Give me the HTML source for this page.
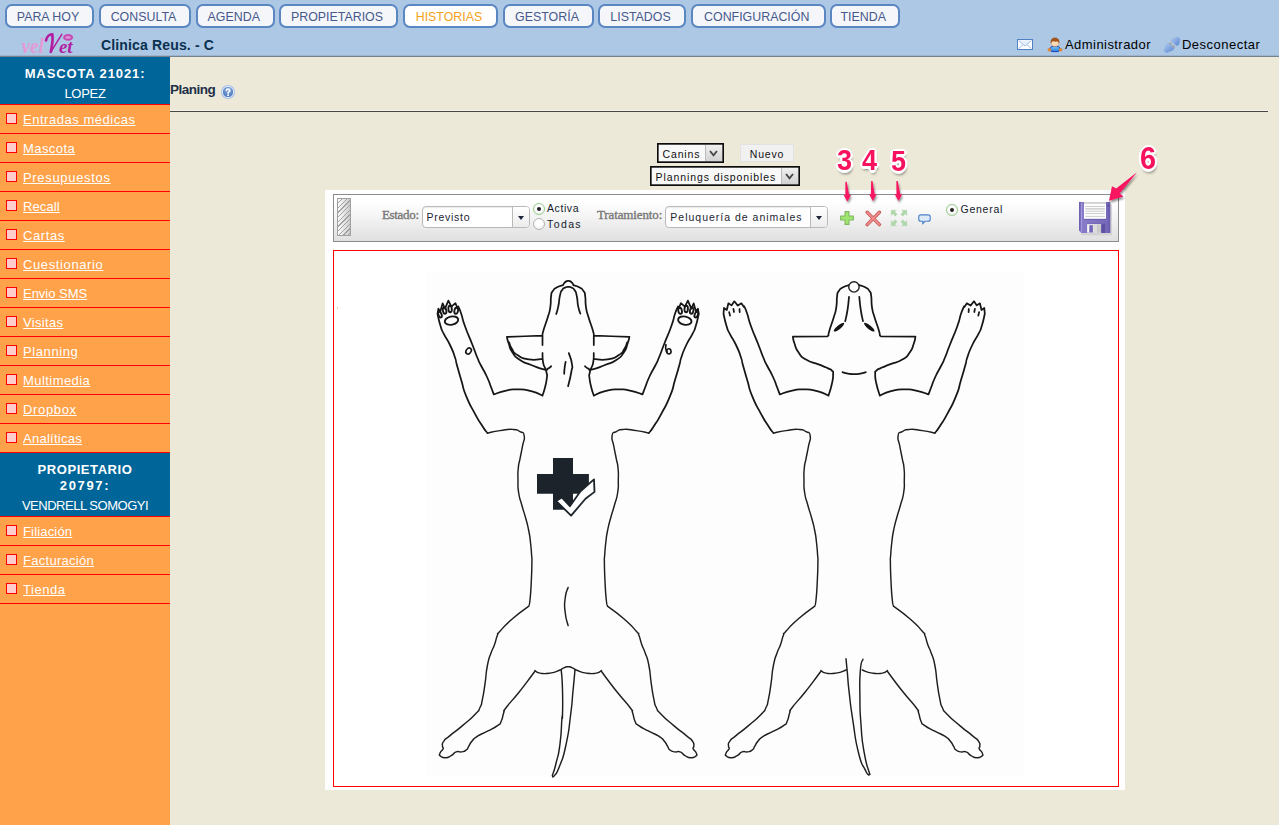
<!DOCTYPE html>
<html lang="es">
<head>
<meta charset="utf-8">
<title>Planing</title>
<style>
*{box-sizing:border-box;margin:0;padding:0}
html,body{width:1279px;height:825px;overflow:hidden}
body{background:#ece9d8;font-family:"Liberation Sans",sans-serif;position:relative;color:#000}
.a{position:absolute}
#top{position:absolute;left:0;top:0;width:1279px;height:56px;background:#adc8e4}
#topl1{position:absolute;left:0;top:55px;width:1279px;height:1px;background:#9db4cc}
#topl2{position:absolute;left:0;top:56px;width:1279px;height:1px;background:#74828f}
.tab{position:absolute;top:4px;height:23.5px;border:2px solid #5a86c2;border-radius:7px;background:#f4f6fa;color:#47598c;font-size:12.4px;line-height:22.4px;text-align:center;white-space:nowrap;padding-right:3px}
.tab.on{color:#f4a21c;background:#fff}
#clin{position:absolute;left:101px;top:36.5px;font-size:14px;font-weight:bold;color:#0a3050;line-height:16px;white-space:nowrap;letter-spacing:.15px}
.tr{position:absolute;top:37px;font-size:13px;line-height:16px;color:#000;white-space:nowrap}
#side{position:absolute;left:0;top:57px;width:170px;height:768px;background:#ffa24a}
.hd{position:absolute;left:0;width:170px;background:#006699;color:#fff;font-size:13px}
.hd b,.hd span{position:absolute;left:0;width:170px;text-align:center;line-height:16px;white-space:nowrap}
.it{position:absolute;left:0;width:170px;height:29px;border-bottom:1px solid #ff0000}
.it.first{height:30px;border-top:1px solid #ff0000}
.it i{position:absolute;left:6px;top:8px;width:11px;height:11px;border:1px solid #ff0000;background:#ffcccc}
.it a{position:absolute;left:23px;top:6px;font-size:13px;line-height:18px;color:#fff;text-decoration:underline;white-space:nowrap}
#ttl{position:absolute;left:170px;top:81px;font-size:13.5px;line-height:18px;font-weight:bold;color:#1e3048;letter-spacing:-.5px}
#hr0{position:absolute;left:170px;top:110px;width:1098px;height:1px;background:#f4f2e0}
#hr{position:absolute;left:170px;top:111px;width:1098px;height:1px;background:#484848}
.sel{position:absolute;background:#f8f8f8;border:1px solid #0c0c0c;box-shadow:inset 0 0 0 .7px #1c1c1c;font-size:10.5px;line-height:14px;white-space:nowrap;color:#111}
.sel s{position:absolute;right:1px;top:1px;width:17px;height:16px;background:linear-gradient(#f0f0f0,#d2d2d2);border-left:1px solid #bbb}
#nuevo{position:absolute;left:740px;top:144px;width:54px;height:18px;background:#f1f1f1;border:1px solid #e2e2e2;font-size:10.5px;line-height:18.8px;text-align:center;letter-spacing:.82px;color:#111}
#panel{position:absolute;left:325px;top:190px;width:800px;height:600px;background:#fff}
#tb{position:absolute;left:333px;top:194px;width:786px;height:48px;border:1px solid #8c8c8c;background:linear-gradient(#ffffff,#ffffff 14%,#f5f5f5 45%,#e9e9e9 75%,#e0e0e0)}
#cv{position:absolute;left:333px;top:250px;width:786px;height:537px;border:1px solid #ff0000;background:#fff}
.lb{position:absolute;font-family:"Liberation Serif",serif;font-size:13px;line-height:16px;color:#747474;white-space:nowrap;-webkit-text-stroke:.35px #7a7a7a}
.cb{position:absolute;top:206px;height:22px;border:1px solid #b9b9b9;border-radius:4px;background:#fff;font-size:10.5px;line-height:20px;color:#1c2430;white-space:nowrap;box-shadow:inset 0 1px 1px rgba(0,0,0,.08)}
.cb s{position:absolute;right:0;top:0;width:17px;height:20px;border-left:1px solid #b9b9b9;background:linear-gradient(#fff,#ececec);border-radius:0 3px 3px 0}
.cb s:after{content:"";position:absolute;left:5px;top:8.8px;border:3.5px solid transparent;border-top:4.5px solid #1c2438;border-bottom:0}
.rd{position:absolute;width:12px;height:12px;border-radius:50%;border:1px solid #b4b4b4;background:radial-gradient(circle at 50% 40%,#fff 40%,#e4e4e4)}
.rd.on{border-color:#9ccf90;box-shadow:0 0 1px #b4dcaa}
.rd.on:after{content:"";position:absolute;left:3px;top:3px;width:4px;height:4px;border-radius:50%;background:#222}
.rl{position:absolute;font-size:10.5px;line-height:14px;color:#14202c;white-space:nowrap}
.num{position:absolute;font-weight:bold;font-size:30px;line-height:30px;color:#f7125e;white-space:nowrap;transform-origin:0 0;
 text-shadow:-2px 0 0 #fff,2px 0 0 #fff,0 -2px 0 #fff,0 2px 0 #fff,-1.5px -1.5px 0 #fff,1.5px -1.5px 0 #fff,-1.5px 1.5px 0 #fff,1.5px 1.5px 0 #fff,-2.5px 0 0 #fff,2.5px 0 0 #fff,0 2.5px 0 #fff,0 -2.5px 0 #fff,1px 4px 3px rgba(0,0,0,.45)}
</style>
</head>
<body>
<div id="top"></div><div id="topl1"></div><div id="topl2"></div>
<div class="tab" style="left:5px;width:89px">PARA HOY</div>
<div class="tab" style="left:99px;width:92px">CONSULTA</div>
<div class="tab" style="left:196px;width:78.5px">AGENDA</div>
<div class="tab" style="left:279px;width:119px">PROPIETARIOS</div>
<div class="tab on" style="left:403px;width:95px">HISTORIAS</div>
<div class="tab" style="left:503px;width:91px">GESTORÍA</div>
<div class="tab" style="left:598px;width:88px">LISTADOS</div>
<div class="tab" style="left:691px;width:134.5px">CONFIGURACIÓN</div>
<div class="tab" style="left:830px;width:69.5px">TIENDA</div>
<div id="side"></div>
<div class="hd" style="top:57px;height:47px"><b style="top:9px;letter-spacing:.88px">MASCOTA 21021:</b><span style="top:29px;letter-spacing:-.3px">LOPEZ</span></div>
<div class="it first" style="top:104px"><i></i><a style="letter-spacing:0.53px">Entradas médicas</a></div>
<div class="it" style="top:134px"><i></i><a style="letter-spacing:0.43px">Mascota</a></div>
<div class="it" style="top:163px"><i></i><a style="letter-spacing:0.68px">Presupuestos</a></div>
<div class="it" style="top:192px"><i></i><a style="letter-spacing:0.09px">Recall</a></div>
<div class="it" style="top:221px"><i></i><a style="letter-spacing:0.58px">Cartas</a></div>
<div class="it" style="top:250px"><i></i><a style="letter-spacing:0.62px">Cuestionario</a></div>
<div class="it" style="top:279px"><i></i><a style="letter-spacing:-0.02px">Envio SMS</a></div>
<div class="it" style="top:308px"><i></i><a style="letter-spacing:0.34px">Visitas</a></div>
<div class="it" style="top:337px"><i></i><a style="letter-spacing:0.6px">Planning</a></div>
<div class="it" style="top:366px"><i></i><a style="letter-spacing:0.44px">Multimedia</a></div>
<div class="it" style="top:395px"><i></i><a style="letter-spacing:0.66px">Dropbox</a></div>
<div class="it" style="top:424px"><i></i><a style="letter-spacing:0.27px">Analíticas</a></div>
<div class="hd" style="top:453px;height:63px"><b style="top:8.5px;letter-spacing:.56px">PROPIETARIO</b><b style="top:25px;letter-spacing:1.67px">20797:</b><span style="top:45px;letter-spacing:-.48px">VENDRELL SOMOGYI</span></div>
<div class="it first" style="top:516px"><i></i><a style="letter-spacing:0.17px">Filiación</a></div>
<div class="it" style="top:546px"><i></i><a style="letter-spacing:0.28px">Facturación</a></div>
<div class="it" style="top:575px"><i></i><a style="letter-spacing:0.54px">Tienda</a></div>
<!-- logo -->
<svg class="a" style="left:18px;top:30px" width="60" height="26" viewBox="18 30 60 26">
 <text x="21.4" y="52.6" font-family="Liberation Serif" font-style="italic" font-weight="bold" font-size="22" fill="#e39bd7" textLength="22.6" lengthAdjust="spacingAndGlyphs">vel</text>
 <path d="M46 40.4 C46.8 36.6 49.6 34.2 52.2 34.4 C53.6 39 51.6 47 50.8 52" fill="none" stroke="#b21ea2" stroke-width="2.7" stroke-linecap="round"/>
 <path d="M50.8 52.3 C53.4 47.6 58.6 39.6 61.8 34.4" fill="none" stroke="#b21ea2" stroke-width="1.5" stroke-linecap="round"/>
 <text x="59" y="52.6" font-family="Liberation Serif" font-style="italic" font-weight="bold" font-size="19" fill="#b21ea2" textLength="13.6" lengthAdjust="spacingAndGlyphs">et</text>
 <ellipse cx="68.1" cy="37.4" rx="5" ry="3.4" fill="#c64cb6"/>
 <ellipse cx="68.1" cy="37.4" rx="2.8" ry="1.2" fill="#e29ad8"/>
</svg>
<div id="clin">Clinica Reus. - C</div>
<!-- mail -->
<svg class="a" style="left:1017px;top:39px" width="16" height="11" viewBox="0 0 16 11">
 <rect x=".5" y=".5" width="15" height="10" fill="#fdfeff" stroke="#4f80c4"/>
 <path d="M1.6 1.6 L8 7 L14.4 1.6 Z" fill="#e6effc"/>
 <path d="M1.6 1.6 L8 7 L14.4 1.6 M1.6 9.6 L6 5.6 M14.4 9.6 L10 5.6" fill="none" stroke="#a4bfe8" stroke-width="1"/>
</svg>
<!-- user -->
<svg class="a" style="left:1047px;top:37px" width="16" height="16" viewBox="1047 37 16 16">
 <defs><linearGradient id="ub" x1="0" y1="0" x2="0" y2="1"><stop offset="0" stop-color="#6cc4fb"/><stop offset="1" stop-color="#2f7fe6"/></linearGradient></defs>
 <path d="M1051.6 46.4 L1049 49.6 L1051 50.2 L1051.6 51.6 L1058.4 51.6 L1059 50.2 L1061 49.6 L1058.4 46.4 Z" fill="url(#ub)" stroke="#1a3fb2" stroke-width="1" stroke-linejoin="round"/>
 <circle cx="1049.4" cy="49.8" r="1.5" fill="#f0923a" stroke="#d0701c" stroke-width=".5"/>
 <circle cx="1060.6" cy="49.8" r="1.5" fill="#f0923a" stroke="#d0701c" stroke-width=".5"/>
 <ellipse cx="1055" cy="42.4" rx="3.9" ry="4.2" fill="#fbd9b8" stroke="#c08040" stroke-width=".5"/>
 <path d="M1051 42.6 C1050.6 39.4 1052.6 37.9 1055 37.9 C1057.4 37.9 1059.4 39.4 1059 42.6 C1058.6 41.4 1057.6 40.8 1055.2 41.4 C1053 40.6 1051.4 41.4 1051 42.6 Z" fill="#a4561c" stroke="#8a4513" stroke-width=".5"/>
</svg>
<div class="tr" style="left:1065px;letter-spacing:.44px">Administrador</div>
<!-- plug -->
<svg class="a" style="left:1162px;top:35px" width="20" height="20" viewBox="1162 35 20 20">
 <defs><linearGradient id="pg" x1="0" y1="0" x2="1" y2="1"><stop offset="0" stop-color="#b7cff0"/><stop offset="1" stop-color="#4f7fd0"/></linearGradient></defs>
 <path d="M1171.2 40.5 L1177.5 36.9 L1180.1 39 L1178.9 44.7 L1176.4 45.8 Z" fill="url(#pg)" stroke="#86a8e0" stroke-width=".6"/>
 <path d="M1163.9 50.8 L1166.3 52.9 L1172.8 50.3 L1174.7 47.5 L1169.1 43.3 L1166.3 44.7 Z" fill="url(#pg)" stroke="#86a8e0" stroke-width=".6"/>
 <rect x="1169.3" y="42.4" width="2.2" height="2.4" fill="#a8a8a4" transform="rotate(-40 1170.4 43.6)"/>
 <rect x="1172.4" y="45.2" width="2.2" height="2.4" fill="#a8a8a4" transform="rotate(-40 1173.5 46.4)"/>
</svg>
<div class="tr" style="left:1182px;letter-spacing:.48px">Desconectar</div>

<div id="ttl">Planing</div>
<svg class="a" style="left:220px;top:84px" width="16" height="16" viewBox="0 0 16 16">
 <defs><radialGradient id="hg" cx="50%" cy="35%" r="65%"><stop offset="0" stop-color="#8fb2e0"/><stop offset="1" stop-color="#3f6fb4"/></radialGradient></defs>
 <circle cx="8" cy="8" r="7" fill="#a9c1e8"/>
 <circle cx="8" cy="8" r="5.6" fill="url(#hg)" stroke="#eef3fb" stroke-width=".9"/>
 <path d="M6.3 6.5 C6.3 4.6 9.9 4.6 9.9 6.5 C9.9 7.7 8.1 7.7 8.1 9.2" fill="none" stroke="#fff" stroke-width="1.5" stroke-linecap="round"/>
 <circle cx="8.1" cy="11.2" r=".95" fill="#fff"/>
</svg>
<div id="hr0"></div><div id="hr"></div>

<div class="sel" style="left:657px;top:143px;width:67px;height:20px;padding:3px 0 0 4.5px;letter-spacing:.87px">Canins<s></s>
 <svg class="a" style="right:5px;top:6px" width="9" height="7" viewBox="0 0 9 7"><path d="M1 1 L4.5 5.4 L8 1" fill="none" stroke="#444" stroke-width="1.8"/></svg></div>
<div id="nuevo">Nuevo</div>
<div class="sel" style="left:650px;top:166px;width:150px;height:20px;padding:3px 0 0 4.5px;letter-spacing:.91px">Plannings disponibles<s></s>
 <svg class="a" style="right:5px;top:6px" width="9" height="7" viewBox="0 0 9 7"><path d="M1 1 L4.5 5.4 L8 1" fill="none" stroke="#444" stroke-width="1.8"/></svg></div>

<div id="panel"></div>
<div id="tb"></div>
<!-- handle -->
<div class="a" style="left:337px;top:198px;width:14px;height:38px;border:1px solid #a0a0a0;background:repeating-linear-gradient(135deg,rgba(0,0,0,0) 0,rgba(0,0,0,0) 2.4px,#a2a2a2 2.4px,#a2a2a2 3.3px),linear-gradient(90deg,#fbfbfb,#e6e6e6 50%,#cccccc)"></div>
<div class="lb" style="left:382px;top:207px;letter-spacing:-.33px">Estado:</div>
<div class="cb" style="left:422px;width:108px;padding-left:3.4px;letter-spacing:.76px">Previsto<s></s></div>
<div class="rd on" style="left:533px;top:202.5px"></div><div class="rl" style="left:547px;top:201.4px;letter-spacing:.58px">Activa</div>
<div class="rd" style="left:533px;top:217.5px"></div><div class="rl" style="left:547.1px;top:216.8px;letter-spacing:1.37px">Todas</div>
<div class="lb" style="left:597px;top:207px;letter-spacing:-.13px">Tratamiento:</div>
<div class="cb" style="left:665px;width:163px;padding-left:4.3px;letter-spacing:1px">Peluquería de animales<s></s></div>
<!-- plus -->
<svg class="a" style="left:839px;top:210px" width="16" height="16" viewBox="0 0 16 16">
 <path d="M6 1.6 H10 V6 H14.4 V10 H10 V14.4 H6 V10 H1.6 V6 H6 Z" fill="#9fe66e" stroke="#80b866" stroke-width="1.1" stroke-linejoin="round"/>
</svg>
<!-- cross -->
<svg class="a" style="left:865px;top:210px" width="17" height="17" viewBox="0 0 17 17">
 <path d="M2.2 2.2 L14.4 14.6 M14.4 2.2 L2.2 14.6" stroke="#c85a5a" stroke-width="3.4" stroke-linecap="round"/>
 <path d="M2.4 2.4 L14.2 14.4 M14.2 2.4 L2.4 14.4" stroke="#f08c8c" stroke-width="1.9" stroke-linecap="round"/>
</svg>
<!-- expand arrows -->
<svg class="a" style="left:890px;top:209px" width="18" height="18" viewBox="0 0 18 18">
 <g fill="#aed8ac" stroke="#a2cf9f" stroke-width=".3">
 <path d="M1.2 1.2 H6.4 L4.8 2.8 L7.2 5.2 L5.2 7.2 L2.8 4.8 L1.2 6.4 Z"/>
 <path d="M16.8 1.2 V6.4 L15.2 4.8 L12.8 7.2 L10.8 5.2 L13.2 2.8 L11.6 1.2 Z"/>
 <path d="M1.2 16.8 V11.6 L2.8 13.2 L5.2 10.8 L7.2 12.8 L4.8 15.2 L6.4 16.8 Z"/>
 <path d="M16.8 16.8 H11.6 L13.2 15.2 L10.8 12.8 L12.8 10.8 L15.2 13.2 L16.8 11.6 Z"/>
 </g>
</svg>
<!-- comment -->
<svg class="a" style="left:917.6px;top:213.6px" width="13" height="12" viewBox="0 0 14 13">
 <path d="M3 1 H11 C12.4 1 13.2 1.8 13.2 3.2 V5.6 C13.2 7 12.4 7.8 11 7.8 H7.6 L5 10.8 L5.4 7.8 H3 C1.6 7.8 .8 7 .8 5.6 V3.2 C.8 1.8 1.6 1 3 1 Z" fill="#dce9fb" stroke="#4b81c6" stroke-width="1.2" stroke-linejoin="round"/>
</svg>
<div class="rd on" style="left:946px;top:203.5px"></div><div class="rl" style="left:960.5px;top:202.2px;letter-spacing:.74px">General</div>
<!-- floppy -->
<svg class="a" style="left:1077px;top:200px" width="38" height="38" viewBox="1077 200 38 38">
 <defs><linearGradient id="fb" x1="0" y1="0" x2="1" y2="0"><stop offset="0" stop-color="#8a7dca"/><stop offset="1" stop-color="#7466b6"/></linearGradient></defs>
 <path d="M1081.2 204.2 H1112 V235.4 H1081.2 Z" fill="#cfcfcf" opacity=".85"/>
 <path d="M1079.1 201.9 H1110.2 V232.9 H1081.4 L1079.1 230.8 Z" fill="url(#fb)"/>
 <rect x="1079.1" y="201.9" width="1.7" height="28.6" fill="#6e60b0"/>
 <rect x="1080.8" y="203" width="1.2" height="28.6" fill="#a59ade"/>
 <rect x="1108.6" y="201.9" width="1.6" height="31" fill="#6a5cac"/>
 <rect x="1107.4" y="204.3" width="1.5" height="2.4" fill="#5f52a0"/>
 <rect x="1084" y="202" width="22" height="16.9" fill="#fdfdfd"/>
 <rect x="1084" y="202" width="22" height="1.8" fill="#d2d2d2"/>
 <path d="M1085.2 206.5 H1104.8 M1085.2 211.3 H1104.8 M1085.2 213.5 H1104.8 M1085.2 216.4 H1104.8" stroke="#cdcdcd" stroke-width="1"/>
 <path d="M1085.2 208.9 H1104.8" stroke="#d0d0d0" stroke-width="1.6"/>
 <rect x="1084" y="218.9" width="22" height=".8" fill="#6a5cac"/>
 <rect x="1087.1" y="223.6" width="18" height=".8" fill="#6a5cac"/>
 <rect x="1087.1" y="224.2" width="14" height="8.5" fill="#f6f6f2"/>
 <rect x="1089.3" y="225.2" width="3.6" height="7.2" fill="#7565b8"/>
 <rect x="1093.2" y="224.6" width="7.8" height="8" fill="#dcdcdc"/>
 <rect x="1097" y="224.6" width="4" height="8" fill="#cacaca"/>
 <rect x="1101.4" y="224.2" width="3.7" height="8.7" fill="#5f50a2"/>
</svg>
<div id="cv"></div>
<!-- annotations -->
<svg class="a" style="left:825px;top:140px" width="360" height="70" viewBox="825 140 360 70">
 <defs><filter id="sh" x="-50%" y="-20%" width="200%" height="150%"><feGaussianBlur in="SourceAlpha" stdDeviation="1"/><feOffset dx="1" dy="2"/><feComponentTransfer><feFuncA type="linear" slope=".45"/></feComponentTransfer><feMerge><feMergeNode/><feMergeNode in="SourceGraphic"/></feMerge></filter></defs>
 <g fill="#f7125e" filter="url(#sh)">
  <path d="M845.4 181.8 L846.7 181.8 L849.2 195.2 L851.1 194.7 L847.4 201.6 L843.5 194.7 L845.4 195.2 Z"/>
  <path d="M871.2 181 L872.5 181 L874.7 194.6 L876.6 194.1 L872.9 201 L869 194.1 L870.9 194.6 Z"/>
  <path d="M896.4 181 L897.7 181 L900.3 194.6 L902.2 194.1 L898.5 201 L894.6 194.1 L896.5 194.6 Z"/>
  <path d="M1137 172.3 L1116.2 188.6 L1112 186.3 L1109 200.8 L1123.4 196.6 L1119.6 193.4 Z"/>
 </g>
</svg>
<div class="num" style="left:836.6px;top:145px;transform:scaleX(.9)">3</div>
<div class="num" style="left:861.6px;top:145px;transform:scaleX(.9)">4</div>
<div class="num" style="left:891.2px;top:145.6px;transform:scaleX(.9)">5</div>
<div class="num" style="left:1140.2px;top:141.6px;font-size:32px;line-height:32px;transform:scaleX(.9)">6</div>
<svg class="a" style="left:334px;top:251px" width="784" height="535" viewBox="334 251 784 535">
<rect x="427" y="272" width="597" height="505" fill="#fdfdfd"/><rect x="337" y="307" width="1" height="2" fill="#ffc890"/>
<path d="M542.5 395.6 C538.8 394.2 539.6 393.3 531.2 391.2 C522.9 389.2 525.8 389.6 517.5 389.4 C509.2 389.2 514.2 388.9 506.2 390.6 C498.3 392.3 497.9 393.1 493.8 394.4 M593.8 395.6 C597.5 394.2 596.7 393.3 605.0 391.2 C613.4 389.2 610.5 389.6 618.8 389.4 C627.1 389.2 622.1 388.9 630.0 390.6 C638.0 392.3 638.4 393.1 642.5 394.4 M493.8 394.4 C492.8 391.9 493.3 393.0 491.0 387.0 C488.7 381.0 490.1 383.7 486.8 376.5 C483.5 369.3 484.2 371.8 481.0 365.5 C477.8 359.2 480.1 364.3 477.3 357.5 C474.5 350.7 476.6 355.4 472.5 345.0 C468.4 334.6 468.8 336.7 465.0 326.2 C461.2 315.8 463.5 320.3 461.2 313.8 C459.0 307.2 459.3 308.9 458.3 306.5 M642.5 394.4 C643.5 391.9 643.0 393.0 645.3 387.0 C647.6 381.0 646.2 383.7 649.5 376.5 C652.8 369.3 652.1 371.8 655.3 365.5 C658.5 359.2 656.2 364.3 659.0 357.5 C661.8 350.7 659.7 355.4 663.8 345.0 C667.9 334.6 667.5 336.7 671.3 326.2 C675.0 315.8 672.8 320.3 675.0 313.8 C677.3 307.2 677.0 308.9 678.0 306.5 M437.5 313.8 C438.5 317.9 438.5 319.6 440.6 326.2 C442.7 332.9 440.6 327.5 443.8 333.8 C446.9 340.0 446.2 337.1 450.0 345.0 C453.8 352.9 452.7 350.8 455.0 357.5 C457.3 364.2 454.8 357.5 456.9 365.0 C459.0 372.5 458.1 369.6 461.2 380.0 C464.4 390.4 461.7 385.0 466.2 396.2 C470.8 407.5 469.6 403.8 475.0 413.8 C480.4 423.8 478.3 419.8 482.5 426.2 C486.7 432.7 485.8 430.8 487.5 433.1 M698.8 313.8 C697.8 317.9 697.8 319.6 695.7 326.2 C693.6 332.9 695.7 327.5 692.5 333.8 C689.4 340.0 690.0 337.1 686.3 345.0 C682.5 352.9 683.6 350.8 681.3 357.5 C679.0 364.2 681.5 357.5 679.4 365.0 C677.3 372.5 678.2 369.6 675.0 380.0 C671.9 390.4 674.6 385.0 670.0 396.2 C665.5 407.5 666.7 403.8 661.3 413.8 C655.9 423.8 658.0 419.8 653.8 426.2 C649.6 432.7 650.5 430.8 648.8 433.1 M563.0 285.2 C561.0 285.9 560.5 285.3 557.1 287.3 C553.7 289.3 554.8 288.1 552.8 291.1 C550.8 294.1 551.9 290.8 551.1 296.2 C550.3 301.6 551.4 300.2 550.3 307.3 C549.2 314.4 550.0 309.8 547.7 317.4 C545.4 325.0 545.3 324.1 543.5 330.2 C541.7 336.3 542.8 333.8 542.4 335.6 M573.3 285.2 C575.3 285.9 575.8 285.3 579.2 287.3 C582.6 289.3 581.5 288.1 583.5 291.1 C585.5 294.1 584.4 290.8 585.2 296.2 C586.0 301.6 584.9 300.2 586.0 307.3 C587.1 314.4 586.3 309.8 588.6 317.4 C590.9 325.0 591.0 324.1 592.8 330.2 C594.6 336.3 593.5 333.8 593.9 335.6 M542.5 335.6 C542.5 338.7 542.5 341.9 542.5 345.0 M593.8 335.6 C593.8 338.7 593.8 341.9 593.8 345.0 M542.5 353.0 C542.7 356.2 542.2 357.4 543.1 362.5 C544.0 367.6 544.0 364.8 545.2 368.3 C546.4 371.8 546.0 369.9 546.6 373.0 C547.2 376.1 547.4 372.7 546.9 377.5 C546.4 382.3 546.5 381.5 545.0 387.5 C543.5 393.5 543.3 392.9 542.5 395.6 M593.8 353.0 C593.6 356.2 594.1 357.4 593.2 362.5 C592.3 367.6 592.3 364.8 591.1 368.3 C589.9 371.8 590.3 369.9 589.7 373.0 C589.1 376.1 588.9 372.7 589.4 377.5 C589.9 382.3 589.8 381.5 591.3 387.5 C592.8 393.5 593.0 392.9 593.8 395.6 M563.0 285.2 C563.7 284.2 563.3 283.6 565.1 282.2 C566.9 280.8 566.2 280.9 568.3 280.9 C570.4 280.9 569.7 280.8 571.5 282.2 C573.3 283.6 572.9 284.2 573.6 285.2 M556.2 314.0 C556.9 311.5 557.0 312.6 558.3 306.4 C559.6 300.2 558.7 300.9 560.0 295.4 C561.3 289.9 560.5 292.5 562.2 289.9 C563.9 287.3 563.0 288.6 565.1 287.6 C567.2 286.6 566.2 286.9 568.4 286.9 C570.6 286.9 569.6 286.6 571.7 287.7 C573.8 288.8 573.0 287.5 574.7 290.3 C576.4 293.1 575.6 290.8 576.8 296.2 C578.0 301.6 577.0 300.6 578.2 306.4 C579.4 312.2 579.6 311.2 580.3 313.6 M506.9 336.9 C518.8 336.5 530.6 336.0 542.5 335.6 M629.4 336.9 C617.5 336.5 605.7 336.0 593.8 335.6 M506.9 336.9 C507.5 339.2 506.9 338.6 508.8 343.8 C510.6 348.9 508.8 347.1 512.5 352.5 C516.2 357.9 513.8 355.8 520.0 360.0 C526.2 364.2 523.3 361.9 531.2 365.0 C539.2 368.1 538.2 368.2 543.8 369.4 C549.3 370.6 545.5 369.7 548.0 368.6 C550.5 367.6 550.2 367.0 551.2 366.2 M629.4 336.9 C628.8 339.2 629.4 338.6 627.5 343.8 C625.7 348.9 627.5 347.1 623.8 352.5 C620.0 357.9 622.5 355.8 616.3 360.0 C610.0 364.2 613.0 361.9 605.0 365.0 C597.1 368.1 598.1 368.2 592.5 369.4 C587.0 370.6 590.8 369.7 588.3 368.6 C585.8 367.6 586.1 367.0 585.0 366.2 M509.2 342.5 C510.1 344.7 509.2 344.8 512.0 349.0 C514.8 353.2 511.9 351.5 517.5 355.0 C523.1 358.5 520.4 358.1 528.8 359.4 C537.1 360.6 537.9 359.0 542.5 358.8 M627.1 342.5 C626.2 344.7 627.1 344.8 624.3 349.0 C621.5 353.2 624.4 351.5 618.8 355.0 C613.2 358.5 615.9 358.1 607.5 359.4 C599.2 360.6 598.4 359.0 593.8 358.8 M568.8 353.1 C569.8 356.7 571.0 357.4 571.9 363.8 C572.8 370.1 572.6 364.5 571.3 372.0 C570.0 379.5 569.2 381.5 568.1 386.2 M565.6 361.9 C565.3 363.9 565.1 364.1 564.6 368.0 C564.1 371.9 564.3 371.8 564.2 373.8 M437.5 313.8 L438.4 308.6 L440.3 311.6 L442.6 303.4 L445.0 308.6 L448.4 300.6 L451.4 306.6 L455.4 303.2 L457.4 308.0 L458.3 306.5 M698.8 313.8 L697.9 308.6 L696.0 311.6 L693.7 303.4 L691.3 308.6 L687.9 300.6 L684.9 306.6 L680.9 303.2 L678.9 308.0 L678.0 306.5" fill="none" stroke="#161616" stroke-width="1.75" stroke-linecap="round" stroke-linejoin="round"/>
<path d="M487.5 433.1 C491.7 432.3 491.7 431.8 500.0 430.6 C508.3 429.4 505.8 429.1 512.5 429.4 C519.2 429.7 516.1 429.5 520.0 431.6 C523.9 433.7 523.4 430.9 524.2 435.8 C525.0 440.7 523.9 438.6 522.5 446.2 C521.1 453.9 521.4 451.5 520.0 458.8 C518.6 466.0 519.0 460.8 518.3 467.9 C517.6 475.0 517.9 471.8 518.0 480.0 C518.1 488.2 517.4 484.2 518.6 492.5 C519.9 500.8 519.5 496.7 521.8 505.0 C524.0 513.3 523.2 509.2 525.5 517.5 C527.8 525.8 526.9 521.7 528.6 530.0 C530.3 538.3 529.5 534.2 530.5 542.5 C531.5 550.8 531.1 548.3 531.6 555.0 C532.1 561.7 532.0 553.8 531.9 562.5 C531.8 571.2 531.9 568.8 531.3 581.2 C530.7 593.8 530.9 591.7 530.0 600.0 C529.1 608.3 529.2 604.2 528.8 606.2 M648.8 433.1 C644.6 432.3 644.6 431.8 636.3 430.6 C628.0 429.4 630.5 429.1 623.8 429.4 C617.1 429.7 620.2 429.5 616.3 431.6 C612.4 433.7 612.9 430.9 612.1 435.8 C611.3 440.7 612.4 438.6 613.8 446.2 C615.2 453.9 614.9 451.5 616.3 458.8 C617.7 466.0 617.3 460.8 618.0 467.9 C618.7 475.0 618.4 471.8 618.3 480.0 C618.2 488.2 618.9 484.2 617.7 492.5 C616.4 500.8 616.8 496.7 614.5 505.0 C612.2 513.3 613.1 509.2 610.8 517.5 C608.5 525.8 609.4 521.7 607.7 530.0 C606.0 538.3 606.8 534.2 605.8 542.5 C604.8 550.8 605.2 548.3 604.7 555.0 C604.2 561.7 604.3 553.8 604.4 562.5 C604.5 571.2 604.4 568.8 605.0 581.2 C605.6 593.8 605.4 591.7 606.3 600.0 C607.1 608.3 607.1 604.2 607.5 606.2 M528.8 606.2 C523.3 610.4 522.1 610.4 512.5 618.8 C502.9 627.1 505.0 625.8 500.0 631.2 C495.0 636.7 499.4 630.4 497.5 635.0 C495.6 639.6 496.5 639.2 494.4 645.0 C492.3 650.8 493.6 645.8 491.2 652.5 C488.9 659.2 489.6 654.6 487.5 665.0 C485.4 675.4 486.7 672.5 485.0 683.8 C483.3 695.0 484.2 690.8 482.5 698.8 C480.8 706.7 482.5 702.3 480.0 707.5 C477.5 712.7 480.8 708.4 475.0 714.4 C469.2 720.4 470.8 718.5 462.5 725.6 C454.2 732.7 456.2 730.4 450.0 735.6 C443.8 740.8 446.2 737.7 443.8 741.2 C441.2 744.8 442.7 743.8 442.5 746.2 C442.3 748.8 443.9 746.5 443.1 748.8 C442.3 751.0 440.8 750.6 440.0 753.1 C439.2 755.6 438.7 754.7 440.6 756.2 C442.5 757.8 442.1 758.0 445.6 757.8 C449.2 757.5 447.7 757.6 451.2 755.6 C454.8 753.6 452.9 753.1 456.2 751.9 C459.6 750.7 457.9 752.5 461.2 751.9 C464.6 751.3 463.8 751.9 466.2 750.0 C468.8 748.1 466.9 749.2 468.8 746.2 C470.6 743.3 469.0 744.6 471.9 741.2 C474.8 737.9 472.3 739.6 477.5 736.2 C482.7 732.9 480.8 734.8 487.5 731.2 C494.2 727.7 492.9 728.9 497.5 725.6 C502.1 722.3 499.2 725.6 501.2 721.2 C503.3 716.9 502.1 717.1 503.8 712.5 C505.4 707.9 501.2 714.2 506.2 707.5 C511.2 700.8 510.4 702.9 518.8 692.5 C527.1 682.1 525.8 683.5 531.2 676.2 C536.7 669.0 533.8 672.5 535.0 670.6 M607.5 606.2 C613.0 610.4 614.2 610.4 623.8 618.8 C633.4 627.1 631.3 625.8 636.3 631.2 C641.3 636.7 636.9 630.4 638.8 635.0 C640.7 639.6 639.8 639.2 641.9 645.0 C644.0 650.8 642.8 645.8 645.0 652.5 C647.3 659.2 646.7 654.6 648.8 665.0 C650.9 675.4 649.6 672.5 651.3 683.8 C653.0 695.0 652.1 690.8 653.8 698.8 C655.5 706.7 653.8 702.3 656.3 707.5 C658.8 712.7 655.5 708.4 661.3 714.4 C667.1 720.4 665.5 718.5 673.8 725.6 C682.1 732.7 680.0 730.4 686.3 735.6 C692.5 740.8 690.0 737.7 692.5 741.2 C695.0 744.8 693.6 743.8 693.8 746.2 C694.0 748.8 692.4 746.5 693.2 748.8 C694.0 751.0 695.5 750.6 696.3 753.1 C697.1 755.6 697.6 754.7 695.7 756.2 C693.8 757.8 694.2 758.0 690.7 757.8 C687.1 757.5 688.6 757.6 685.0 755.6 C681.5 753.6 683.4 753.1 680.0 751.9 C676.7 750.7 678.4 752.5 675.0 751.9 C671.7 751.3 672.5 751.9 670.0 750.0 C667.5 748.1 669.4 749.2 667.5 746.2 C665.7 743.3 667.3 744.6 664.4 741.2 C661.5 737.9 664.0 739.6 658.8 736.2 C653.6 732.9 655.5 734.8 648.8 731.2 C642.1 727.7 643.4 728.9 638.8 725.6 C634.2 722.3 637.1 725.6 635.0 721.2 C633.0 716.9 634.2 717.1 632.5 712.5 C630.9 707.9 635.0 714.2 630.0 707.5 C625.0 700.8 625.9 702.9 617.5 692.5 C609.2 682.1 610.5 683.5 605.0 676.2 C599.6 669.0 602.5 672.5 601.3 670.6 M535.0 670.6 C536.7 671.4 535.0 672.3 540.0 673.1 C545.0 673.9 543.3 674.1 550.0 673.1 C556.7 672.1 556.7 671.0 560.0 670.0 M601.3 670.6 C599.6 671.4 601.3 672.3 596.3 673.1 C591.3 673.9 593.0 674.1 586.3 673.1 C579.6 672.1 579.6 671.0 576.3 670.0 M568.1 587.5 C567.1 591.0 566.2 589.7 565.2 598.0 C564.2 606.3 564.2 603.3 565.2 612.5 C566.2 621.7 567.1 621.2 568.1 625.6 M560.0 670.0 C561.5 669.2 561.8 668.7 564.5 667.6 C567.2 666.5 565.7 666.8 568.1 666.8 C570.6 666.8 569.1 666.5 571.8 667.6 C574.5 668.7 574.8 669.2 576.3 670.0 M561.2 669.4 C561.7 676.3 562.1 674.8 562.5 690.0 C562.9 705.2 562.7 705.4 562.5 715.0 C562.3 724.6 562.7 709.2 561.9 718.8 C561.1 728.3 561.9 729.2 560.0 743.8 C558.1 758.3 558.8 752.1 556.2 762.5 C553.8 772.9 553.8 770.8 552.5 775.0 M575.0 669.4 C574.4 676.3 574.6 674.8 573.1 690.0 C571.6 705.2 572.9 697.1 570.6 715.0 C568.3 732.9 569.8 727.1 566.2 743.8 C562.7 760.4 564.0 754.4 560.0 765.0 C556.0 775.6 557.0 772.2 554.4 775.6 C551.8 779.0 553.0 775.3 552.3 775.2" fill="none" stroke="#1e1e1e" stroke-width="1.45" stroke-linecap="round" stroke-linejoin="round"/>
<g fill="none" stroke="#161616" stroke-width="1.9"><ellipse cx="440.0" cy="314.6" rx="1.6" ry="3.0" transform="rotate(-20 440.0 314.6)"/><ellipse cx="696.3" cy="314.6" rx="1.6" ry="3.0" transform="rotate(20 696.3 314.6)"/><ellipse cx="444.6" cy="310.6" rx="1.7" ry="3.2" transform="rotate(-12 444.6 310.6)"/><ellipse cx="691.7" cy="310.6" rx="1.7" ry="3.2" transform="rotate(12 691.7 310.6)"/><ellipse cx="450.1" cy="309.0" rx="1.7" ry="3.2" transform="rotate(-4 450.1 309.0)"/><ellipse cx="686.2" cy="309.0" rx="1.7" ry="3.2" transform="rotate(4 686.2 309.0)"/><ellipse cx="456.2" cy="310.8" rx="1.8" ry="3.1" transform="rotate(12 456.2 310.8)"/><ellipse cx="680.1" cy="310.8" rx="1.8" ry="3.1" transform="rotate(-12 680.1 310.8)"/><ellipse cx="451.5" cy="320.6" rx="6.8" ry="4.1" transform="rotate(-12 451.5 320.6)"/><ellipse cx="684.8" cy="320.6" rx="6.8" ry="4.1" transform="rotate(12 684.8 320.6)"/><ellipse cx="468.6" cy="351" rx="2.4" ry="3.3" transform="rotate(35 468.6 351)" stroke-width="1.6"/><path d="M666 344 C665 349 666.5 354.5 669.2 354 C672 353.4 671.5 348.6 668.6 348.8 C666.6 349 666.4 351.6 667.6 352.6" stroke-width="1.6"/></g>
<path d="M553 458.1 H573 V474 H588.9 V493.75 H573 V509.75 H553 V493.75 H537 V474 H553 Z" fill="#1c232b"/>
<path d="M556.1 501 L561.75 497.5 L569.9 506.25 L580.5 491.25 L594 479.4 L594.5 491.9 L585.5 498.75 L571.1 515.6 Z" fill="#fff" stroke="#1c232b" stroke-width="1.8" stroke-linejoin="round"/>
<path d="M828.5 395.6 C824.8 394.2 825.6 393.3 817.2 391.2 C808.9 389.2 811.8 389.6 803.5 389.4 C795.2 389.2 800.2 388.9 792.2 390.6 C784.3 392.3 783.9 393.1 779.8 394.4 M879.8 395.6 C883.5 394.2 882.7 393.3 891.0 391.2 C899.4 389.2 896.5 389.6 904.8 389.4 C913.1 389.2 908.1 388.9 916.0 390.6 C924.0 392.3 924.4 393.1 928.5 394.4 M779.8 394.4 C778.8 391.9 779.3 393.0 777.0 387.0 C774.7 381.0 776.1 383.7 772.8 376.5 C769.5 369.3 770.2 371.8 767.0 365.5 C763.8 359.2 766.1 364.3 763.3 357.5 C760.5 350.7 762.6 355.4 758.5 345.0 C754.4 334.6 754.8 336.7 751.0 326.2 C747.2 315.8 749.5 320.3 747.2 313.8 C745.0 307.2 745.3 308.9 744.3 306.5 M928.5 394.4 C929.5 391.9 929.0 393.0 931.3 387.0 C933.6 381.0 932.2 383.7 935.5 376.5 C938.8 369.3 938.1 371.8 941.3 365.5 C944.5 359.2 942.2 364.3 945.0 357.5 C947.8 350.7 945.7 355.4 949.8 345.0 C953.9 334.6 953.5 336.7 957.3 326.2 C961.0 315.8 958.8 320.3 961.0 313.8 C963.3 307.2 963.0 308.9 964.0 306.5 M723.5 313.8 C724.5 317.9 724.5 319.6 726.6 326.2 C728.7 332.9 726.6 327.5 729.8 333.8 C732.9 340.0 732.2 337.1 736.0 345.0 C739.8 352.9 738.7 350.8 741.0 357.5 C743.3 364.2 740.8 357.5 742.9 365.0 C745.0 372.5 744.1 369.6 747.2 380.0 C750.4 390.4 747.7 385.0 752.2 396.2 C756.8 407.5 755.6 403.8 761.0 413.8 C766.4 423.8 764.3 419.8 768.5 426.2 C772.7 432.7 771.8 430.8 773.5 433.1 M984.8 313.8 C983.8 317.9 983.8 319.6 981.7 326.2 C979.6 332.9 981.7 327.5 978.5 333.8 C975.4 340.0 976.0 337.1 972.3 345.0 C968.5 352.9 969.6 350.8 967.3 357.5 C965.0 364.2 967.5 357.5 965.4 365.0 C963.3 372.5 964.2 369.6 961.0 380.0 C957.9 390.4 960.6 385.0 956.0 396.2 C951.5 407.5 952.7 403.8 947.3 413.8 C941.9 423.8 944.0 419.8 939.8 426.2 C935.6 432.7 936.5 430.8 934.8 433.1 M849.0 285.2 C847.0 285.9 846.5 285.3 843.1 287.3 C839.7 289.3 840.8 288.1 838.8 291.1 C836.8 294.1 837.9 290.8 837.1 296.2 C836.3 301.6 837.4 300.2 836.3 307.3 C835.2 314.4 836.0 309.8 833.7 317.4 C831.4 325.0 831.3 324.1 829.5 330.2 C827.7 336.3 828.8 333.8 828.4 335.6 M859.3 285.2 C861.3 285.9 861.8 285.3 865.2 287.3 C868.6 289.3 867.5 288.1 869.5 291.1 C871.5 294.1 870.4 290.8 871.2 296.2 C872.0 301.6 870.9 300.2 872.0 307.3 C873.1 314.4 872.3 309.8 874.6 317.4 C876.9 325.0 877.0 324.1 878.8 330.2 C880.6 336.3 879.5 333.8 879.9 335.6 M792.9 336.6 L827.4 336.3 L828.4 335.6 M915.4 336.6 L880.9 336.3 L879.9 335.6 M792.9 336.9 C793.4 339.1 792.6 338.3 794.5 343.5 C796.4 348.7 794.8 347.1 798.6 352.5 C802.4 357.9 799.4 355.6 806.0 359.6 C812.6 363.6 811.3 361.6 818.5 364.4 C825.7 367.2 823.0 366.0 827.5 368.1 C832.0 370.2 830.0 368.5 831.9 370.6 C833.8 372.7 833.1 370.0 833.1 374.4 C833.1 378.8 833.4 376.7 831.9 383.8 C830.4 390.8 829.6 391.7 828.5 395.6 M915.4 336.9 C914.9 339.1 915.7 338.3 913.8 343.5 C911.9 348.7 913.5 347.1 909.7 352.5 C905.9 357.9 908.9 355.6 902.3 359.6 C895.7 363.6 897.0 361.6 889.8 364.4 C882.6 367.2 885.3 366.0 880.8 368.1 C876.3 370.2 878.3 368.5 876.4 370.6 C874.5 372.7 875.2 370.0 875.2 374.4 C875.2 378.8 874.9 376.7 876.4 383.8 C877.9 390.8 878.7 391.7 879.8 395.6 M849.0 296.9 C848.5 301.3 848.8 301.9 847.5 310.0 C846.2 318.1 846.0 317.5 845.2 321.2 M859.3 296.9 C859.8 301.3 859.5 301.9 860.8 310.0 C862.0 318.1 862.3 317.5 863.0 321.2 M842.5 372.2 C844.3 372.7 844.1 373.0 848.0 373.6 C851.9 374.2 850.0 374.1 854.1 374.1 C858.2 374.1 856.4 374.2 860.3 373.6 C864.2 373.0 864.0 372.7 865.8 372.2 M723.5 313.8 L724.0 308.0 L726.8 310.0 L728.4 303.3 L731.5 305.4 L734.3 301.3 L737.8 305.6 L741.4 303.3 L743.9 307.0 L744.3 306.5 M984.8 313.8 L984.3 308.0 L981.5 310.0 L979.9 303.3 L976.8 305.4 L974.0 301.3 L970.5 305.6 L966.9 303.3 L964.4 307.0 L964.0 306.5 M729.2 312.2 L730.0 315.6 M979.1 312.2 L978.3 315.6 M733.4 308.8 L734.0 312.0 M974.9 308.8 L974.3 312.0 M739.5 309.0 L739.7 312.2 M968.8 309.0 L968.6 312.2" fill="none" stroke="#161616" stroke-width="1.75" stroke-linecap="round" stroke-linejoin="round"/>
<path d="M773.5 433.1 C777.7 432.3 777.7 431.8 786.0 430.6 C794.3 429.4 791.8 429.1 798.5 429.4 C805.2 429.7 802.1 429.5 806.0 431.6 C809.9 433.7 809.4 430.9 810.2 435.8 C811.0 440.7 809.9 438.6 808.5 446.2 C807.1 453.9 807.4 451.5 806.0 458.8 C804.6 466.0 805.0 460.8 804.3 467.9 C803.6 475.0 803.9 471.8 804.0 480.0 C804.1 488.2 803.4 484.2 804.6 492.5 C805.9 500.8 805.5 496.7 807.8 505.0 C810.0 513.3 809.2 509.2 811.5 517.5 C813.8 525.8 812.9 521.7 814.6 530.0 C816.3 538.3 815.5 534.2 816.5 542.5 C817.5 550.8 817.1 548.3 817.6 555.0 C818.1 561.7 818.0 553.8 817.9 562.5 C817.8 571.2 817.9 568.8 817.3 581.2 C816.7 593.8 816.9 591.7 816.0 600.0 C815.1 608.3 815.2 604.2 814.8 606.2 M934.8 433.1 C930.6 432.3 930.6 431.8 922.3 430.6 C914.0 429.4 916.5 429.1 909.8 429.4 C903.1 429.7 906.2 429.5 902.3 431.6 C898.4 433.7 898.9 430.9 898.1 435.8 C897.3 440.7 898.4 438.6 899.8 446.2 C901.2 453.9 900.9 451.5 902.3 458.8 C903.7 466.0 903.3 460.8 904.0 467.9 C904.7 475.0 904.4 471.8 904.3 480.0 C904.2 488.2 904.9 484.2 903.7 492.5 C902.4 500.8 902.8 496.7 900.5 505.0 C898.2 513.3 899.1 509.2 896.8 517.5 C894.5 525.8 895.4 521.7 893.7 530.0 C892.0 538.3 892.8 534.2 891.8 542.5 C890.8 550.8 891.2 548.3 890.7 555.0 C890.2 561.7 890.3 553.8 890.4 562.5 C890.5 571.2 890.4 568.8 891.0 581.2 C891.6 593.8 891.4 591.7 892.3 600.0 C893.1 608.3 893.1 604.2 893.5 606.2 M814.8 606.2 C809.3 610.4 808.1 610.4 798.5 618.8 C788.9 627.1 791.0 625.8 786.0 631.2 C781.0 636.7 785.4 630.4 783.5 635.0 C781.6 639.6 782.5 639.2 780.4 645.0 C778.3 650.8 779.5 645.8 777.2 652.5 C775.0 659.2 775.6 654.6 773.5 665.0 C771.4 675.4 772.7 672.5 771.0 683.8 C769.3 695.0 770.2 690.8 768.5 698.8 C766.8 706.7 768.5 702.3 766.0 707.5 C763.5 712.7 766.8 708.4 761.0 714.4 C755.2 720.4 756.8 718.5 748.5 725.6 C740.2 732.7 742.2 730.4 736.0 735.6 C729.8 740.8 732.2 737.7 729.8 741.2 C727.2 744.8 728.7 743.8 728.5 746.2 C728.3 748.8 729.9 746.5 729.1 748.8 C728.3 751.0 726.8 750.6 726.0 753.1 C725.2 755.6 724.7 754.7 726.6 756.2 C728.5 757.8 728.1 758.0 731.6 757.8 C735.1 757.5 733.7 757.6 737.2 755.6 C740.8 753.6 738.9 753.1 742.2 751.9 C745.6 750.7 743.9 752.5 747.2 751.9 C750.6 751.3 749.8 751.9 752.2 750.0 C754.8 748.1 752.9 749.2 754.8 746.2 C756.6 743.3 755.0 744.6 757.9 741.2 C760.8 737.9 758.3 739.6 763.5 736.2 C768.7 732.9 766.8 734.8 773.5 731.2 C780.2 727.7 778.9 728.9 783.5 725.6 C788.1 722.3 785.2 725.6 787.2 721.2 C789.3 716.9 788.1 717.1 789.8 712.5 C791.4 707.9 787.2 714.2 792.2 707.5 C797.2 700.8 796.4 702.9 804.8 692.5 C813.1 682.1 811.8 683.5 817.2 676.2 C822.7 669.0 819.8 672.5 821.0 670.6 M893.5 606.2 C899.0 610.4 900.2 610.4 909.8 618.8 C919.4 627.1 917.3 625.8 922.3 631.2 C927.3 636.7 922.9 630.4 924.8 635.0 C926.7 639.6 925.8 639.2 927.9 645.0 C930.0 650.8 928.8 645.8 931.0 652.5 C933.3 659.2 932.7 654.6 934.8 665.0 C936.9 675.4 935.6 672.5 937.3 683.8 C939.0 695.0 938.1 690.8 939.8 698.8 C941.5 706.7 939.8 702.3 942.3 707.5 C944.8 712.7 941.5 708.4 947.3 714.4 C953.1 720.4 951.5 718.5 959.8 725.6 C968.1 732.7 966.0 730.4 972.3 735.6 C978.5 740.8 976.0 737.7 978.5 741.2 C981.0 744.8 979.6 743.8 979.8 746.2 C980.0 748.8 978.4 746.5 979.2 748.8 C980.0 751.0 981.5 750.6 982.3 753.1 C983.1 755.6 983.6 754.7 981.7 756.2 C979.8 757.8 980.2 758.0 976.7 757.8 C973.1 757.5 974.6 757.6 971.0 755.6 C967.5 753.6 969.4 753.1 966.0 751.9 C962.7 750.7 964.4 752.5 961.0 751.9 C957.7 751.3 958.5 751.9 956.0 750.0 C953.5 748.1 955.4 749.2 953.5 746.2 C951.7 743.3 953.3 744.6 950.4 741.2 C947.5 737.9 950.0 739.6 944.8 736.2 C939.6 732.9 941.5 734.8 934.8 731.2 C928.1 727.7 929.4 728.9 924.8 725.6 C920.2 722.3 923.1 725.6 921.0 721.2 C919.0 716.9 920.2 717.1 918.5 712.5 C916.9 707.9 921.0 714.2 916.0 707.5 C911.0 700.8 911.9 702.9 903.5 692.5 C895.2 682.1 896.5 683.5 891.0 676.2 C885.6 669.0 888.5 672.5 887.3 670.6 M821.0 670.6 C822.7 671.4 821.0 672.3 826.0 673.1 C831.0 673.9 829.3 674.1 836.0 673.1 C842.7 672.1 842.7 671.0 846.0 670.0 M887.3 670.6 C885.6 671.4 887.3 672.3 882.3 673.1 C877.3 673.9 879.0 674.1 872.3 673.1 C865.6 672.1 865.6 671.0 862.3 670.0 M846.0 658.8 C846.4 663.2 846.2 660.7 847.3 672.0 C848.4 683.3 847.3 676.4 849.2 692.6 C851.1 708.9 849.8 700.7 852.9 720.8 C856.0 740.8 854.4 736.4 858.5 752.7 C862.6 769.0 861.6 762.1 865.1 769.6 C868.6 777.1 867.6 773.3 868.9 775.2 M862.9 659.3 C862.1 662.9 861.4 657.7 860.4 670.0 C859.4 682.3 859.7 678.1 859.9 696.3 C860.1 714.5 859.6 705.7 861.0 724.5 C862.4 743.3 861.3 736.1 864.2 752.7 C867.1 769.3 867.9 767.1 869.8 774.3" fill="none" stroke="#1e1e1e" stroke-width="1.45" stroke-linecap="round" stroke-linejoin="round"/>
<circle cx="853.95" cy="286.9" r="5.2" fill="#fff" stroke="#1f1f1f" stroke-width="1.4"/>
<ellipse cx="839" cy="327.2" rx="6.6" ry="1.9" transform="rotate(-39 839 327.2)" fill="#141414"/>
<ellipse cx="869.3" cy="327.2" rx="6.6" ry="1.9" transform="rotate(39 869.3 327.2)" fill="#141414"/>
</svg>
</body>
</html>
